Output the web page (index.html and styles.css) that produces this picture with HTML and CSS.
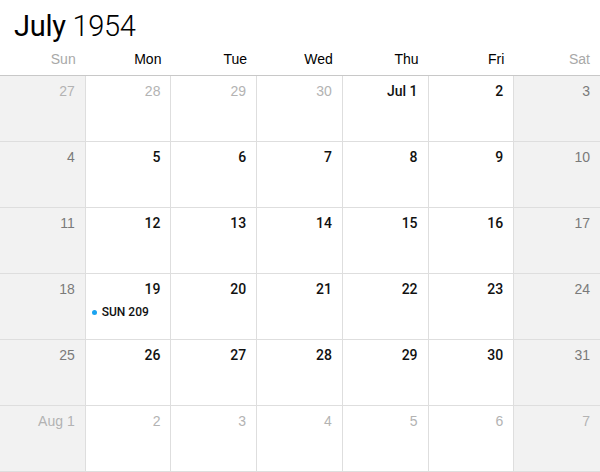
FILE: index.html
```html
<!DOCTYPE html>
<html>
<head>
<meta charset="utf-8">
<link rel="stylesheet" href="styles.css">
</head>
<body>
<div class="cal">
  <h1 class="title"><span class="month">July</span> <span class="year">1954</span></h1>
  <div class="dow">
    <div class="dn we">Sun</div><div class="dn">Mon</div><div class="dn">Tue</div><div class="dn">Wed</div><div class="dn">Thu</div><div class="dn">Fri</div><div class="dn we">Sat</div>
  </div>
  <div class="grid">
    <div class="cell we other"><span class="num">27</span></div>
    <div class="cell other"><span class="num">28</span></div>
    <div class="cell other"><span class="num">29</span></div>
    <div class="cell other"><span class="num">30</span></div>
    <div class="cell"><span class="num">Jul 1</span></div>
    <div class="cell"><span class="num">2</span></div>
    <div class="cell we"><span class="num">3</span></div>

    <div class="cell we"><span class="num">4</span></div>
    <div class="cell"><span class="num">5</span></div>
    <div class="cell"><span class="num">6</span></div>
    <div class="cell"><span class="num">7</span></div>
    <div class="cell"><span class="num">8</span></div>
    <div class="cell"><span class="num">9</span></div>
    <div class="cell we"><span class="num">10</span></div>

    <div class="cell we"><span class="num">11</span></div>
    <div class="cell"><span class="num">12</span></div>
    <div class="cell"><span class="num">13</span></div>
    <div class="cell"><span class="num">14</span></div>
    <div class="cell"><span class="num">15</span></div>
    <div class="cell"><span class="num">16</span></div>
    <div class="cell we"><span class="num">17</span></div>

    <div class="cell we"><span class="num">18</span></div>
    <div class="cell"><span class="num">19</span><div class="event"><span class="dot"></span>SUN 209</div></div>
    <div class="cell"><span class="num">20</span></div>
    <div class="cell"><span class="num">21</span></div>
    <div class="cell"><span class="num">22</span></div>
    <div class="cell"><span class="num">23</span></div>
    <div class="cell we"><span class="num">24</span></div>

    <div class="cell we"><span class="num">25</span></div>
    <div class="cell"><span class="num">26</span></div>
    <div class="cell"><span class="num">27</span></div>
    <div class="cell"><span class="num">28</span></div>
    <div class="cell"><span class="num">29</span></div>
    <div class="cell"><span class="num">30</span></div>
    <div class="cell we"><span class="num">31</span></div>

    <div class="cell we other"><span class="num">Aug 1</span></div>
    <div class="cell other"><span class="num">2</span></div>
    <div class="cell other"><span class="num">3</span></div>
    <div class="cell other"><span class="num">4</span></div>
    <div class="cell other"><span class="num">5</span></div>
    <div class="cell other"><span class="num">6</span></div>
    <div class="cell we other"><span class="num">7</span></div>
  </div>
</div>
</body>
</html>
```
FILE: styles.css
```css
html, body {
  margin: 0;
  padding: 0;
  background: #fff;
}
body {
  font-family: "Liberation Sans", Arial, sans-serif;
  color: #000;
  overflow: hidden;
}
.cal {
  width: 600px;
  height: 472px;
  display: flex;
  flex-direction: column;
}
.title {
  margin: 0;
  padding: 9px 0 0 14px;
  height: 41px;
  box-sizing: border-box;
  font-family: Roboto, "Liberation Sans", sans-serif;
  font-size: 29px;
  line-height: 34px;
  font-weight: 400;
  letter-spacing: -0.3px;
}
.month { font-weight: 400; }
.year { font-weight: 300; }
.dow {
  display: grid;
  grid-template-columns: repeat(7, 1fr);
  height: 35px;
  border-bottom: 1px solid #c8c8c8;
  box-sizing: border-box;
}
.dn {
  text-align: right;
  padding: 9px 10px 0 0;
  font-size: 14px;
  line-height: 18px;
}
.dn.we { color: #a8a8a8; }
.grid {
  flex: 1;
  display: grid;
  grid-template-columns: repeat(7, 1fr);
  grid-template-rows: repeat(6, 1fr);
}
.cell {
  border-right: 1px solid #dedede;
  border-bottom: 1px solid #dedede;
  display: flex;
  flex-direction: column;
  align-items: flex-end;
  padding: 7px 10px 0 6px;
  min-width: 0;
}
.cell:nth-child(7n) { border-right: none; }
.cell.we { background: #f2f2f2; }
.num {
  font-family: Roboto, "Liberation Sans", sans-serif;
  font-size: 14px;
  line-height: 16px;
  font-weight: 500;
  color: #111;
}
.cell.we .num { color: #7a7a7a; font-weight: 400; font-family: "Liberation Sans", Arial, sans-serif; }
.cell.other .num { color: #b3b3b3; font-weight: 400; font-family: "Liberation Sans", Arial, sans-serif; }
.event {
  align-self: stretch;
  display: flex;
  align-items: center;
  gap: 5px;
  margin-top: 8px;
  font-family: Roboto, "Liberation Sans", sans-serif;
  font-size: 12px;
  line-height: 14px;
  font-weight: 500;
  color: #111;
}
.dot {
  width: 5px;
  height: 5px;
  border-radius: 50%;
  background: #1aa3f0;
}
```
